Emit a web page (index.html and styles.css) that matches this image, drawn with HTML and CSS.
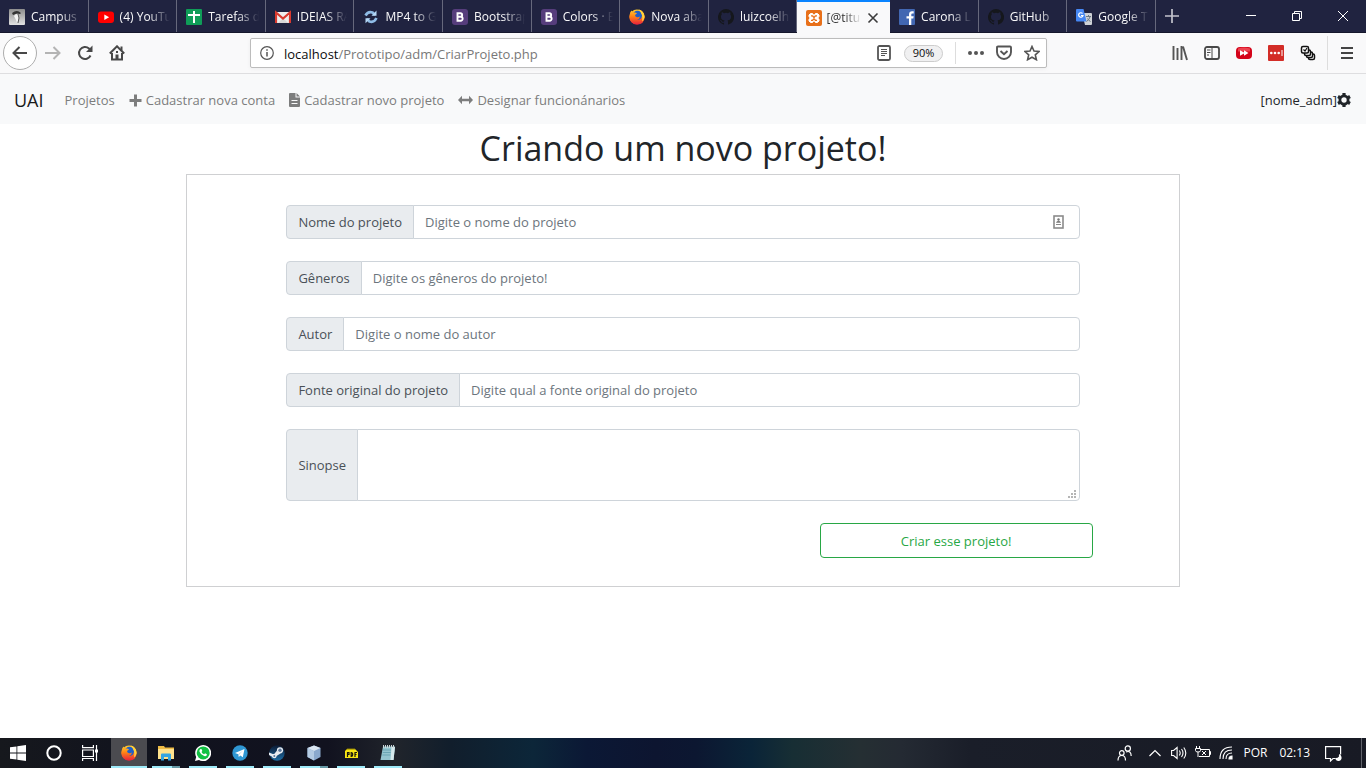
FILE: index.html
```html
<!DOCTYPE html>
<html lang="pt-BR">
<head>
<meta charset="utf-8">
<meta name="viewport" content="width=device-width, initial-scale=1">
<title>Criar projeto</title>
<link rel="stylesheet" href="styles.css">
</head>
<body>
<svg class="defs" aria-hidden="true">
  <defs>
    <linearGradient id="fox" x1="0" y1="0" x2="0" y2="1"><stop offset="0" stop-color="#ffd02e"/><stop offset=".45" stop-color="#ff8516"/><stop offset="1" stop-color="#e8203c"/></linearGradient>
    <linearGradient id="steam" x1="0" y1="0" x2="0" y2="1"><stop offset="0" stop-color="#0b1a34"/><stop offset="1" stop-color="#1c6da5"/></linearGradient>
    <linearGradient id="campus" x1="0" y1="0" x2="0" y2="1"><stop offset="0" stop-color="#8d8d8d"/><stop offset="1" stop-color="#e2e2e2"/></linearGradient>
    <symbol id="firefox" viewBox="0 0 16 16">
      <circle cx="8" cy="8" r="7.6" fill="url(#fox)"/>
      <circle cx="8.4" cy="6.4" r="4.6" fill="#1e5fc9"/>
      <path d="M.6 6Q1 3 2.5 1.600Q3 3 4.600 3.500Q7 3 8 4.500L6 6Q6 8 8 8.300Q10 8.500 11 7.500Q10.500 10.500 8 11Q4 11.500 3.600 7.500Q3 12 8 13Q13 13 13.500 8Q13.500 3.500 9.500.5Q15 1.500 15.600 8Q15 15.600 8 15.600Q1 15 .4 8z" fill="url(#fox)"/>
      <path d="M9.500.5Q15.500 2 15.600 8Q15 11 13 12.500Q14.500 5 9.500.5z" fill="#ffd23a"/>
    </symbol>
    <symbol id="bootstrap" viewBox="0 0 16 16">
      <rect width="16" height="16" rx="3" fill="#563d7c"/>
      <path d="M5.500 4.300h2.900a1.700 1.700 0 0 1 0 3.500H5.500zm0 3.500h3.200a1.900 1.900 0 0 1 0 3.900H5.500z" fill="none" stroke="#fff" stroke-width="1.900"/>
    </symbol>
    <symbol id="github" viewBox="0 0 16 16">
      <path fill="#15171c" d="M8 0a8 8 0 0 0-2.530 15.590c.4.070.55-.17.55-.38v-1.490c-2.010.37-2.530-.49-2.690-.94-.09-.23-.48-.94-.82-1.130-.28-.15-.68-.52-.01-.53.63-.01 1.080.58 1.230.82.72 1.210 1.870.87 2.330.66.070-.52.28-.87.51-1.070-1.780-.2-3.640-.89-3.640-3.950 0-.87.31-1.590.82-2.150-.08-.2-.36-1.020.08-2.120 0 0 .67-.21 2.200.82a7.400 7.400 0 0 1 4 0c1.530-1.040 2.200-.82 2.200-.82.44 1.100.16 1.920.08 2.120.51.56.82 1.270.82 2.150 0 3.070-1.870 3.750-3.650 3.950.29.25.54.73.54 1.480v2.200c0 .21.15.46.55.38A8 8 0 0 0 8 0z"/>
    </symbol>
  </defs>
</svg>

<header class="tabs-bar">
  <nav class="tabs" aria-label="Abas">
    <a class="tab" href="#"><svg class="fav" viewBox="0 0 16 16"><rect width="16" height="16" rx="1" fill="url(#campus)"/><path d="M3 4Q8 0 12 4L11 5 8 4.500 4 6z" fill="#333"/><path d="M5 7l2-2 3 1v4l-2 4-1-3z" fill="#f3f3f3"/><path d="M9 5l1 4-1 5" stroke="#555" fill="none"/></svg><span class="tab-label">Campus</span></a>
    <a class="tab" href="#"><svg class="fav" viewBox="0 0 16 16"><rect y="2.500" width="16" height="11.500" rx="3" fill="#f00"/><path d="M6.300 5.500v5.500l4.800-2.750z" fill="#fff"/></svg><span class="tab-label">(4) YouTu</span></a>
    <a class="tab" href="#"><svg class="fav" viewBox="0 0 16 16"><rect width="16" height="16" rx="1" fill="#0f9d58"/><path d="M7 2h2v3h5v2H9v7H7V7H2V5h5z" fill="#fff"/></svg><span class="tab-label">Tarefas d</span></a>
    <a class="tab" href="#"><svg class="fav" viewBox="0 0 16 16"><path d="M1 3h14v11H1z" fill="#eee"/><path d="M3 14l5-5 5 5z" fill="#d8d8d8"/><path d="M1 14V3.500l7 6 7-6V14" fill="none" stroke="#d93a2f" stroke-width="2.200"/></svg><span class="tab-label">IDEIAS RA</span></a>
    <a class="tab" href="#"><svg class="fav" viewBox="0 0 16 16" fill="none" stroke="#8fbce6" stroke-width="2.600"><path d="M2.500 6.500Q5 2 9.500 3.500L12 6M13.500 9Q11 14 6.500 12.500L4 10"/><path d="M13.500 1.500v5.200H8.500zM2.500 14.300V9.200h5z" fill="#b5d7f5" stroke="none"/></svg><span class="tab-label">MP4 to G</span></a>
    <a class="tab" href="#"><svg class="fav"><use href="#bootstrap"/></svg><span class="tab-label">Bootstrap</span></a>
    <a class="tab" href="#"><svg class="fav"><use href="#bootstrap"/></svg><span class="tab-label">Colors · B</span></a>
    <a class="tab" href="#"><svg class="fav"><use href="#firefox"/></svg><span class="tab-label">Nova aba</span></a>
    <a class="tab" href="#"><svg class="fav"><use href="#github"/></svg><span class="tab-label">luizcoelh</span></a>
    <div class="tab tab-active"><svg class="fav" viewBox="0 0 16 16"><rect width="16" height="16" rx="2" fill="#e8701a"/><path d="M4.500 3.500h2L8 5.500l1.500-2h2L13 5v1.500L11.800 8 13 9.500V11l-1.500 1.500h-2L8 10.500l-1.500 2h-2L3 11V9.500L4.200 8 3 6.500V5z" fill="#fff" stroke="#fff" stroke-width="1"/><path d="M5 5.800h1.500L8 7.500l1.500-1.700H11M5 10.300h1.500L8 8.500l1.500 1.800H11" fill="none" stroke="#e8701a" stroke-width="1.300"/></svg><span class="tab-label">[@titu</span><button class="tab-close" type="button" aria-label="Fechar aba"><svg width="12" height="12" viewBox="0 0 12 12"><path d="M1.500 1.500l9 9m0-9l-9 9" stroke="#3c3c3c" stroke-width="1.600"/></svg></button></div>
    <a class="tab" href="#"><svg class="fav" viewBox="0 0 16 16"><rect width="16" height="16" rx="1" fill="#4267b2"/><path d="M10 16V9.500H7.500v-2.300H10V5.500C10 3.200 11.300 2.300 13 2.300h1.700v2.200h-1.200c-.8 0-1.200.4-1.200 1.100v1.600h2.400l-.4 2.300h-2V16z" fill="#fff"/></svg><span class="tab-label">Carona L</span></a>
    <a class="tab" href="#"><svg class="fav"><use href="#github"/></svg><span class="tab-label">GitHub</span></a>
    <a class="tab" href="#"><svg class="fav" viewBox="0 0 16 16"><path d="M6 4h9a1 1 0 0 1 1 1v10a1 1 0 0 1-1 1H9z" fill="#cfd2d6"/><path d="M1 0h6.500l3 12.500H1a1 1 0 0 1-1-1V1a1 1 0 0 1 1-1z" fill="#4587f4"/><path d="M6.500 4.500A2.200 2.200 0 1 0 7 6.500H5" stroke="#fff" fill="none" stroke-width="1.200"/><path d="M10 7.500h5M12.500 6v1.500M14 8q-1 3-3.500 4.500M11.500 9.500q1 2 3 3" stroke="#697784" fill="none"/></svg><span class="tab-label">Google T</span></a>
  </nav>
  <button class="new-tab" type="button" aria-label="Nova aba"><svg width="14" height="14" viewBox="0 0 14 14"><path d="M7 0v14M0 7h14" stroke="#c3c3cd" stroke-width="1.700"/></svg></button>
  <div class="window-controls">
    <button type="button" aria-label="Minimizar"><svg width="10" height="10" viewBox="0 0 10 10"><path d="M0 4.500h10" stroke="#fff"/></svg></button>
    <button type="button" aria-label="Restaurar"><svg width="10" height="10" viewBox="0 0 10 10"><path d="M.5 2.500h7v7h-7zM2.500 2.500v-2h7v7h-2" fill="none" stroke="#fff"/></svg></button>
    <button type="button" aria-label="Fechar"><svg width="10" height="10" viewBox="0 0 10 10"><path d="M0 0l10 10M10 0L0 10" stroke="#fff"/></svg></button>
  </div>
</header>

<div class="toolbar">
  <div class="history">
    <button class="back" type="button" aria-label="Voltar"><svg width="16" height="16" viewBox="0 0 16 16"><path d="M15 8H2M7.500 2L1.500 8l6 6" fill="none" stroke="#484848" stroke-width="2"/></svg></button>
    <button type="button" aria-label="Avançar"><svg width="16" height="16" viewBox="0 0 16 16"><path d="M0 8h14M8.500 2l6 6-6 6" fill="none" stroke="#b4b4b4" stroke-width="2"/></svg></button>
    <button type="button" aria-label="Recarregar"><svg width="16" height="16" viewBox="0 0 16 16"><path d="M13.500 10.500A6 6 0 1 1 12 3.500L14 5.500" fill="none" stroke="#484848" stroke-width="2"/><path d="M15.500.5v6.500H9z" fill="#484848"/></svg></button>
    <button type="button" aria-label="Página inicial"><svg width="16" height="16" viewBox="0 0 16 16"><path d="M.8 8.500L8 1.300l7.200 7.200M3 8v6.500h10V8" fill="none" stroke="#484848" stroke-width="2"/><path d="M6.500 14.500V9.500h3v5z" fill="#484848"/><path d="M7 6h2v2H7zM11.500 1.500h2v4h-2z" fill="#484848"/></svg></button>
  </div>
  <div class="urlbar">
    <svg class="info" width="14" height="14" viewBox="0 0 14 14"><circle cx="7" cy="7" r="6.300" fill="none" stroke="#555" stroke-width="1.200"/><path d="M7 6v4.500M7 3.300v1.500" stroke="#555" stroke-width="1.500"/></svg>
    <div class="url"><span class="host">localhost</span>/Prototipo/adm/CriarProjeto.php</div>
    <svg class="reader" width="14" height="16" viewBox="0 0 14 16"><rect x="1" y="1" width="12" height="14" rx="1.500" fill="none" stroke="#555" stroke-width="1.800"/><path d="M4 4.500h6M4 6.500h6M4 8.500h6M4 10.500h4" stroke="#555"/></svg>
    <button class="zoom-level" type="button">90%</button>
    <div class="page-actions">
      <svg width="16" height="16" viewBox="0 0 16 16" fill="#555"><circle cx="2" cy="8" r="2"/><circle cx="8" cy="8" r="2"/><circle cx="14" cy="8" r="2"/></svg>
      <svg width="16" height="16" viewBox="0 0 16 16" fill="none" stroke="#555" stroke-width="1.900"><path d="M1 2.500q0-1 1-1h12q1 0 1 1V7a7 7 0 0 1-14 0z"/><path d="M4.500 6L8 9.300 11.500 6"/></svg>
      <svg width="16" height="16" viewBox="0 0 16 16"><path d="M8 1.500l2 4.500 5 .5-3.700 3.300 1.100 4.900L8 12.200l-4.400 2.500 1.100-4.900L1 6.500 6 6z" fill="none" stroke="#555" stroke-width="1.600"/></svg>
    </div>
  </div>
  <div class="extensions">
    <svg width="16" height="16" viewBox="0 0 16 16"><path d="M1.500 1v14M5.500 3v12M9.500 1v14M11 1.500L15 15" stroke="#555" stroke-width="1.900"/></svg>
    <svg width="16" height="16" viewBox="0 0 16 16"><rect x="1" y="2" width="14" height="12" rx="2" fill="none" stroke="#484848" stroke-width="1.800"/><path d="M8 2v12M3 5h3.500M3 7.500h3.500M3 10h2" stroke="#484848"/></svg>
    <svg width="16" height="16" viewBox="0 0 16 16"><rect y="2" width="16" height="12" rx="4" fill="#d4041a"/><path d="M2 3.500q6-2 12 0v3H2z" fill="#ec4350"/><path d="M4 5.300v5.400L8 8.500v2.200l4.500-2.700L8 5.300v2.200z" fill="#fff"/></svg>
    <svg width="16" height="16" viewBox="0 0 16 16"><rect width="16" height="16" rx="1" fill="#d32d27"/><g fill="#fff"><circle cx="3.300" cy="8" r="1.300"/><circle cx="7" cy="8" r="1.300"/><circle cx="10.700" cy="8" r="1.300"/><path d="M13.500 5h1v6h-1z"/></g></svg>
    <svg width="16" height="16" viewBox="0 0 16 16" fill="#fff" stroke="#111" stroke-width="1.500"><rect x="8.500" y="9" width="6" height="5.500" rx="1.500"/><rect x="6.500" y="7" width="6" height="5.500" rx="1.500"/><rect x="4.500" y="5" width="6" height="5.500" rx="1.500"/><rect x="1.500" y="1.500" width="7" height="6.500" rx="1.500"/><path d="M3.500 4.500L5 6l2-3" stroke-width="1.200"/></svg>
  </div>
  <button class="menu" type="button" aria-label="Menu"><svg width="12" height="12" viewBox="0 0 12 12"><path d="M0 1h12M0 6h12M0 11h12" stroke="#444" stroke-width="2"/></svg></button>
</div>

<nav class="navbar" aria-label="Principal">
  <a class="brand" href="#">UAI</a>
  <div class="links">
    <a href="#">Projetos</a>
    <a href="#"><svg width="13" height="13" viewBox="0 0 13 13"><path d="M6.500.5v12M.5 6.500h12" stroke="#7c7d7d" stroke-width="3"/></svg>Cadastrar nova conta</a>
    <a href="#"><svg width="11" height="14" viewBox="0 0 11 14"><path d="M1 0h5.500v4.500H11V13a1 1 0 0 1-1 1H1a1 1 0 0 1-1-1V1a1 1 0 0 1 1-1zM7.500 0L11 3.500H7.500z" fill="#7c7d7d"/><path d="M2.500 7.500h6M2.500 10.500h6" stroke="#f8f9fa"/></svg>Cadastrar novo projeto</a>
    <a href="#"><svg width="15" height="10" viewBox="0 0 15 10"><path d="M0 5l4-4.300v3h7v-3L15 5l-4 4.300v-3H4v3z" fill="#7c7d7d"/></svg>Designar funcionánarios</a>
  </div>
  <a class="account" href="#">[nome_adm]<svg width="14" height="14" viewBox="0 0 14 14"><path d="M7 2.900a4.100 4.100 0 1 0 0 8.200 4.100 4.100 0 0 0 0-8.200z" fill="none" stroke="#212529" stroke-width="2.800"/><path d="M7 0v2.500M7 11.500V14M1 3.500l2.200 1.300M10.800 9.200L13 10.500M13 3.500l-2.200 1.300M3.200 9.200L1 10.500" stroke="#212529" stroke-width="3.200"/></svg></a>
</nav>

<main class="page">
  <h1>Criando um novo projeto!</h1>
  <form class="project-form">
    <div class="group"><label for="nome">Nome do projeto</label><input id="nome" type="text" placeholder="Digite o nome do projeto"><svg class="autofill" width="11" height="14" viewBox="0 0 11 14"><rect x="1" y="1" width="9" height="12" fill="none" stroke="#8b8b8b" stroke-width="1.600"/><circle cx="5.500" cy="4.500" r="1.200" fill="#777"/><path d="M3.500 7.300q2-3 4 0zM3 9.500h5" fill="#777" stroke="#888"/></svg></div>
    <div class="group"><label for="generos">Gêneros</label><input id="generos" type="text" placeholder="Digite os gêneros do projeto!"></div>
    <div class="group"><label for="autor">Autor</label><input id="autor" type="text" placeholder="Digite o nome do autor"></div>
    <div class="group"><label for="fonte">Fonte original do projeto</label><input id="fonte" type="text" placeholder="Digite qual a fonte original do projeto"></div>
    <div class="group group-tall"><label for="sinopse">Sinopse</label><textarea id="sinopse"></textarea><svg class="grip" width="8" height="8" viewBox="0 0 8 8" fill="#b5b5b5"><path d="M6 0h2v2H6zM3 3h2v2H3zM6 3h2v2H6zM0 6h2v2H0zM3 6h2v2H3zM6 6h2v2H6z"/></svg></div>
    <button class="submit" type="submit">Criar esse projeto!</button>
  </form>
</main>

<footer class="taskbar">
  <div class="system-buttons">
    <button type="button" aria-label="Iniciar"><svg width="16" height="16" viewBox="0 0 16 16" fill="#fff"><path d="M0 2.300L6.500 1.400v6.200H0zM7.300 1.300L16 0v7.600H7.300zM0 8.400h6.500v6.200L0 13.700zM7.300 8.400H16V16l-8.700-1.300z"/></svg></button>
    <button type="button" aria-label="Cortana"><svg width="16" height="16" viewBox="0 0 16 16"><circle cx="8" cy="8" r="6.700" fill="none" stroke="#fff" stroke-width="2"/></svg></button>
    <button type="button" aria-label="Visão de tarefas"><svg width="16" height="16" viewBox="0 0 16 16" fill="none" stroke="#fff" stroke-width="1.200"><path d="M.6 0v2.600h10.800V0M.6 5h10.800v6.500H.6zM.6 16v-2.500h10.800V16M14.500 0v16"/><path d="M13 4.500h3v3h-3z" fill="#fff" stroke="none"/></svg></button>
  </div>
  <div class="apps">
    <button class="app app-current" type="button" aria-label="Firefox"><svg width="16" height="16"><use href="#firefox"/></svg></button>
    <button class="app app-stacked" type="button" aria-label="Explorador"><svg width="16" height="16" viewBox="0 0 16 16"><path d="M0 1h6l1 1.500h9V14H0z" fill="#eebb45"/><path d="M0 4h16v10H0z" fill="#ffe28d"/><path d="M3 15.500V9.500q0-1 1-1h8q1 0 1 1v6h-3V12H6v3.500z" fill="#35a5e2"/></svg></button>
    <button class="app" type="button" aria-label="WhatsApp"><svg width="16" height="16" viewBox="0 0 16 16"><path d="M0 16l1.200-4A8 8 0 1 1 4 14.900z" fill="#fff"/><circle cx="8.200" cy="7.900" r="6.500" fill="#12c143"/><path d="M5.500 4l1.200.2.600 1.700-.8 1q.9 1.700 2.600 2.400l1-1 1.800.9-.1 1.100q-1 1.200-2.700.7-3.500-1.200-4.700-4.500-.2-1.700 1.100-2.500z" fill="#fff"/></svg></button>
    <button class="app" type="button" aria-label="Telegram"><svg width="16" height="16" viewBox="0 0 16 16"><circle cx="8" cy="8" r="7.700" fill="#2f97d3"/><path d="M3 8l9.500-4-1.700 8.300-2.500-1.800-1.500 1.400-.4-2.700z" fill="#fff"/><path d="M6.400 9.200L11 5.500 7.300 9.600l-.5 2.300z" fill="#a9cfe6"/></svg></button>
    <button class="app" type="button" aria-label="Steam"><svg width="16" height="16" viewBox="0 0 16 16"><circle cx="8" cy="8" r="7.700" fill="url(#steam)"/><path d="M0 7.500l5 2L7.500 6l4 2.500-4 2.500-2 2L0 10z" fill="#e8edf2"/><circle cx="11" cy="5.300" r="3.100" fill="#e8edf2"/><circle cx="11" cy="5.300" r="1.700" fill="#5d7a9c"/><circle cx="5.300" cy="11" r="2.300" fill="#e8edf2"/><circle cx="5.300" cy="11" r="1" fill="#5d7a9c"/></svg></button>
    <button class="app app-stacked" type="button" aria-label="VirtualBox"><svg width="16" height="16" viewBox="0 0 16 16"><path d="M8 .5L14.500 3v9L8 15.500 1.500 12V3z" fill="#8ba9ce"/><path d="M8 .5L14.500 3 8 6 1.500 3z" fill="#dbe7f3"/><path d="M1.500 3L8 6v9.500L1.500 12z" fill="#b4cbe4"/></svg></button>
    <button class="app" type="button" aria-label="PDF"><svg width="16" height="16" viewBox="0 0 16 16"><path d="M2 6l2-2h8l3 3v6H2z" fill="#f7e614"/><path d="M2 6l2-2h8" stroke="#8a7a00" fill="none"/><path d="M4.500 12V7.500h1.500v2H4.500M8.200 7.500v4q1.500 0 1.500-2t-1.500-2zM12 12V7.500h2M12 9.500h1.500" stroke="#17170b" stroke-width="1.200" fill="none"/></svg></button>
    <button class="app" type="button" aria-label="Bloco de notas"><svg width="16" height="16" viewBox="0 0 16 16"><path d="M3 1.500h12L13.500 15H.5z" fill="#94c5cf"/><path d="M11.500 2H15l-1.500 13h-3z" fill="#d6e9ec"/><path d="M3 5h8M2.700 7.500h8M2.400 10h8" stroke="#6aa5b3"/><path d="M3.500 0v3M5.500 0v3M7.500 0v3M9.500 0v3M11.500 0v3M13.500 0v3" stroke="#ccd6d8"/></svg></button>
  </div>
  <div class="tray">
    <svg width="16" height="16" viewBox="0 0 16 16" fill="none" stroke="#fff" stroke-width="1.200"><circle cx="4.800" cy="8" r="2.300"/><path d="M1 15.500q0-5 3.800-5t3.700 5"/><circle cx="10.800" cy="3.500" r="2.600"/><path d="M9 7q5-2 5.200 4"/></svg>
    <svg class="chevron" width="12" height="8" viewBox="0 0 12 8"><path d="M.5 7L6 1.500 11.500 7" fill="none" stroke="#fff" stroke-width="1.200"/></svg>
    <svg width="16" height="16" viewBox="0 0 16 16" fill="none" stroke="#fff" stroke-width="1.100"><path d="M.6 5.500h2l3.500-3v11l-3.500-3h-2zM8.300 5.500q1.800 2.500 0 5M10.500 4q3 4 0 8M12.800 2.500q4 5.500 0 11"/></svg>
    <svg width="16" height="16" viewBox="0 0 16 16" fill="none" stroke="#fff" stroke-width="1"><path d="M6 4.500h8.500v7H4M14.500 6.500h1v3h-1M7 6l4 4M11 6l-4 4M1.500 1v2.500M4.500 1v2.500M.5 3.500h5v2q0 1.500-2.500 1.500T.5 5.500zM3 7v5"/></svg>
    <svg width="14" height="14" viewBox="0 0 14 14" fill="none" stroke="#fff" stroke-width="1.100"><path d="M1 13Q1 1 13 1M4 13Q4 4 13 4M7 13Q7 7 13 7"/><path d="M10 13q0-3 3-3v3z" fill="#fff"/></svg>
    <span class="lang">POR</span>
    <time>02:13</time>
    <svg class="notice" width="17" height="17" viewBox="0 0 17 17" fill="none" stroke="#fff" stroke-width="1.200"><path d="M10 13.500H8L5.500 16v-2.500H.6V1.600h15v8"/><path d="M14.500 9q-1 .8-.5 2.500-1.500 2-4 1.500 1 3.400 4 3 3-1 2.500-4-.5-2-2-3z" fill="#fff" stroke="none"/></svg>
  </div>
</footer>
</body>
</html>
```

FILE: styles.css
```css
* { box-sizing: border-box; }

body {
  margin: 0;
  min-height: 100vh;
  display: flex;
  flex-direction: column;
  background: #fff;
  color: #212529;
  font-family: "Open Sans", "Noto Sans", sans-serif;
  font-size: 13px;
  line-height: 22px;
}

button, input, textarea { font: inherit; }

button {
  display: flex;
  align-items: center;
  justify-content: center;
  padding: 0;
  border: 0;
  background: none;
}

a { color: inherit; text-decoration: none; }
svg { display: block; flex: none; }
.defs { position: absolute; width: 0; height: 0; }

/* Tab strip */
.tabs-bar {
  display: flex;
  height: 33px;
  background: #202340;
  color: #f9f9fa;
  font-size: 12px;
  border-bottom: 1px solid #15172c;
}

.tabs { display: flex; flex: 1; max-width: 1156px; min-width: 0; }

.tab {
  display: flex;
  flex: 1 1 0;
  align-items: center;
  gap: 6px;
  min-width: 0;
  padding: 2px 4px 0 9px;
  border-right: 1px solid #66687c;
}

.fav { width: 16px; height: 16px; }

.tab-label {
  flex: 1;
  min-width: 0;
  overflow: hidden;
  white-space: nowrap;
  mask-image: linear-gradient(to left, transparent 2px, #000 24px);
}

.tab-active {
  height: 33px;
  background: #f9f9fa;
  color: #333;
  border-top: 2px solid #0a84ff;
  border-right: 0;
  gap: 4px;
  padding: 0 9px;
}

.tab-active .tab-label { mask-image: linear-gradient(to left, transparent, #000 16px); }
.tab-close { width: 16px; height: 16px; }
.new-tab { width: 32px; }
.window-controls { display: flex; margin-left: auto; }
.window-controls button { width: 46px; }

/* Address toolbar */
.toolbar {
  display: flex;
  align-items: center;
  height: 41px;
  background: #f9f9fa;
  border-bottom: 1px solid #dedee0;
}

.history { display: flex; align-items: center; flex: none; width: 250px; padding-left: 3px; }
.history button { width: 32px; height: 34px; }
.history .back { width: 34px; border: 1px solid #adadad; border-radius: 50%; background: #fff; }

.urlbar {
  display: flex;
  align-items: center;
  flex: 1;
  min-width: 0;
  height: 30px;
  padding: 0 6px 0 9px;
  border: 1px solid #bcbcbc;
  border-radius: 2px;
  background: #fff;
  box-shadow: 0 1px 4px #0000000d;
}

.url {
  flex: 1;
  min-width: 0;
  margin-left: 10px;
  padding-top: 1px;
  overflow: hidden;
  color: #787878;
  white-space: nowrap;
}

.host { color: #0c0c0d; }

.zoom-level {
  width: 39px;
  height: 17px;
  margin: 0 12px 0 13px;
  border: 1px solid #ccc;
  border-radius: 9px;
  background: #f0f0f1;
  color: #0c0c0d;
  font-size: 11px;
}

.page-actions { display: flex; gap: 12px; padding: 3px 0 3px 12px; border-left: 1px solid #ddd; }
.extensions { display: flex; gap: 16px; padding: 9px 11px 9px 125px; border-right: 1px solid #ddd; }
.menu { width: 38px; height: 34px; }

/* Site navigation */
.navbar {
  display: flex;
  align-items: center;
  min-height: 50px;
  padding: 2px 15px 0 14px;
  background: #f8f9fa;
}

.brand { margin-right: 21px; font-size: 18px; color: #1a1a1a; }
.links { display: flex; gap: 14px; color: #7c7d7d; }
.links a, .account { display: flex; align-items: center; }
.links a { gap: 4px; }
.account { margin-left: auto; }

/* Form page */
.page { flex: 1; width: 100%; max-width: 994px; margin: 0 auto; }

h1 {
  margin: 0;
  padding-bottom: 2px;
  font-size: 34px;
  font-weight: 400;
  line-height: 48px;
  text-align: center;
}

.project-form {
  display: flex;
  flex-direction: column;
  gap: 22px;
  padding: 30px 10% 28px;
  border: 1px solid #cfd0d2;
}

.group { position: relative; display: flex; min-height: 34px; }
.group-tall { min-height: 72px; }

.group label {
  display: flex;
  align-items: center;
  flex: none;
  padding: 0 11px;
  border: 1px solid #ced4da;
  border-radius: 4px 0 0 4px;
  background: #e9ecef;
  color: #495057;
}

.group input,
.group textarea {
  flex: 1;
  min-width: 0;
  margin: 0 0 0 -1px;
  padding: 0 11px;
  border: 1px solid #ced4da;
  border-radius: 0 4px 4px 0;
  background: #fff;
  color: #495057;
  resize: none;
}

.group ::placeholder { color: #6c757d; opacity: 1; }
.autofill { position: absolute; right: 16px; top: 10px; }
.grip { position: absolute; right: 4px; bottom: 3px; }

.submit {
  align-self: flex-end;
  width: 273px;
  height: 35px;
  margin-right: -13px;
  border: 1px solid #28a745;
  border-radius: 4px;
  color: #28a745;
}

/* Desktop taskbar */
.taskbar {
  display: flex;
  height: 30px;
  background: linear-gradient(90deg, #16181d, #11131e 10%, #11121f 24%, #20242b 29%, #111e2c 33%, #0c2639 39%, #0b1835 43%, #0d1530 48%, #0c1731 51%, #0a2438 55%, #172e34 58%, #252f33 63%, #242a33 66%, #1a1e29 71%, #181a24);
  color: #fff;
  font-size: 12px;
}

.system-buttons { display: flex; margin-right: 3px; }
.system-buttons button { width: 36px; }
.apps { display: flex; gap: 1px; }

.app {
  width: 36px;
  padding-top: 2px;
  border-bottom: 2px solid transparent;
  background: linear-gradient(#9eeaf9, #9eeaf9) center bottom / 28px 2px no-repeat border-box;
}

.app-current { background: linear-gradient(#9eeaf9, #9eeaf9) center bottom / 100% 2px no-repeat border-box #4b4b50; }
.app-stacked { background-image: linear-gradient(90deg, #9eeaf9 20px, #6699a6 20px); }

.tray { display: flex; align-items: center; gap: 8px; margin-left: auto; padding-right: 4px; }
.tray .chevron { margin: 0 2px 0 8px; }
.lang { margin-left: 2px; }
.tray time { margin-left: 4px; }
.notice { margin: 0 16px 0 7px; }
.tray::after { content: ""; width: 1px; height: 30px; margin-left: -5px; background: #60626a; }
```
